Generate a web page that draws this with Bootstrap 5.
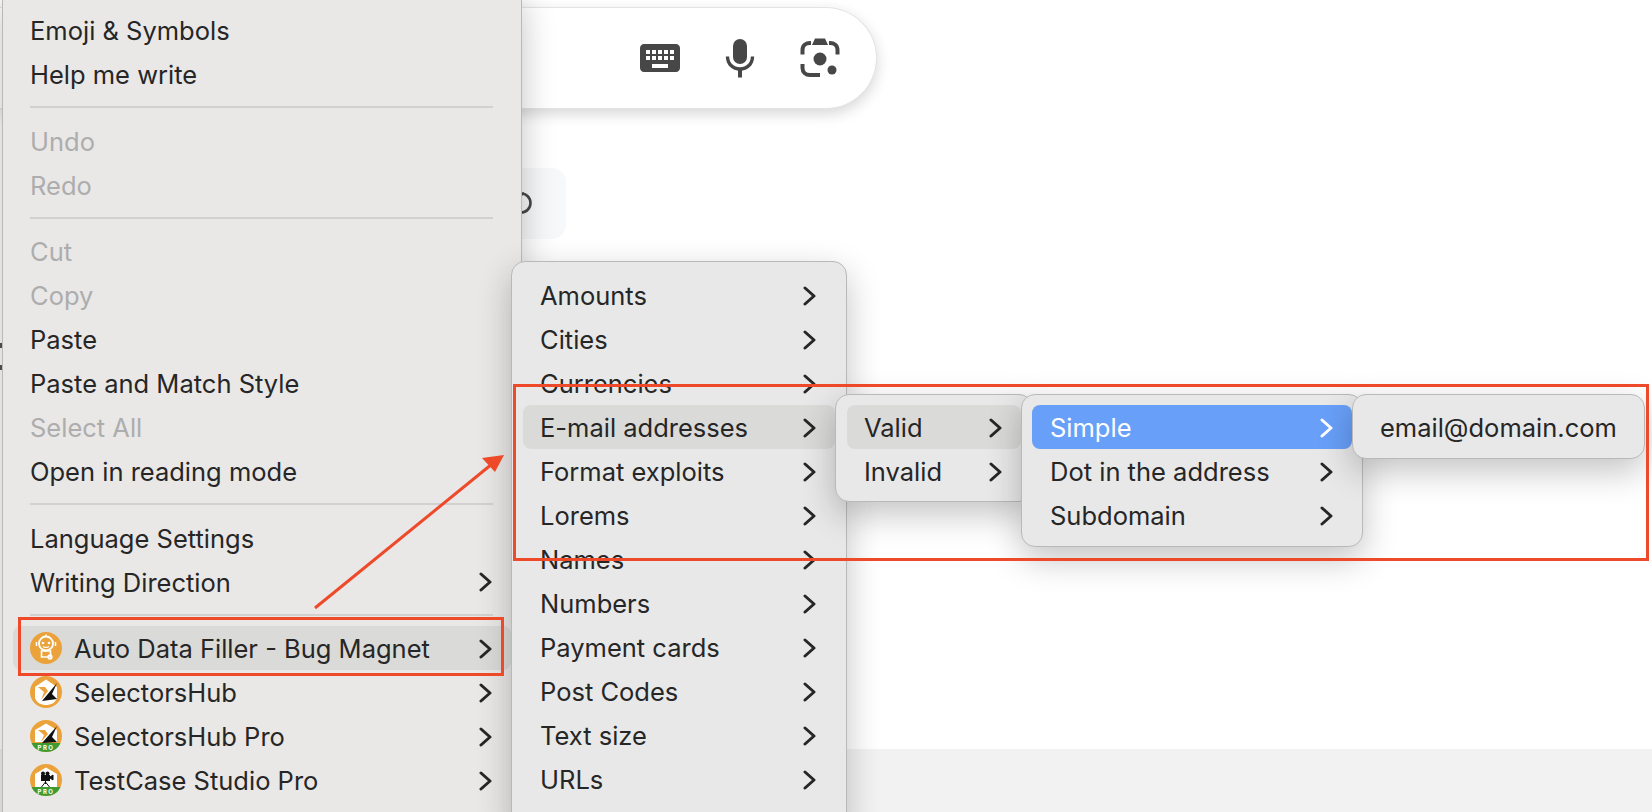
<!doctype html>
<html lang="en">
<head>
<meta charset="utf-8">
<title>Context menu</title>
<link href="https://cdn.jsdelivr.net/npm/bootstrap@5.3.0/dist/css/bootstrap.min.css" rel="stylesheet">
<style>
html,body{height:812px;overflow:hidden;background:#fff}
.stage{position:relative;height:812px;width:1652px;overflow:hidden;font-family:Inter,"Liberation Sans",sans-serif}
.search-pill{width:877px;height:102px;margin-top:7px;background:#fff;border-radius:0 52px 52px 0;border:1px solid #e3e3e8;border-left:0;box-shadow:0 5px 14px rgba(32,33,36,.18);padding-right:32px;gap:32px;flex:none}
.search-pill svg{display:block}
.ghost-chip{width:160px;height:71px;margin-top:59px;margin-left:406px;background:#f7f8f9;border-radius:14px;padding-left:104px;padding-bottom:4px;flex:none}
.foot-band{height:63px;background:#f2f2f2;flex:none}
.ctx{position:absolute;background:#e8e8e8;border:1px solid #b9b9b9;border-radius:14px;box-shadow:0 12px 34px rgba(0,0,0,.24);color:#262626;font-size:25.5px;letter-spacing:0;line-height:1}
.ctx-main{left:2px;top:-13px;width:520px;height:850px;padding:20px 10px 0;background:#e9e8e7}
.ctx-one{left:511px;top:261px;width:336px;height:570px;padding:11px 11px 0}
.ctx-two{left:835px;top:394px;width:198px;height:108px;padding:10px 11px}
.ctx-three{left:1021px;top:394px;width:342px;height:153px;padding:10px}
.ctx-three .rowitem{padding-left:18px}
.ctx-four{left:1352px;top:394px;width:293px;height:65px;padding:10px}
.rowitem{height:44px;padding:2px 18px 0 17px;border-radius:8px;white-space:nowrap;flex:none}
.rowitem.off{color:#adadad}
.rowitem.hov{background:#dadad9}
.rowitem.sel{background:#689ff8;color:#fff}
.rowitem.withicon{padding-left:0}
.appicon{width:32px;height:32px;margin:-2px 12px 0 17px;flex:none;display:block}
.chev{width:13px;height:20px;margin:-1px 1px 0 0;flex:none;display:block;fill:none;stroke:currentColor;stroke-width:3;stroke-linecap:round;stroke-linejoin:round}
.rule{height:2px;background:#d2d1d0;margin:10px 18px 10.5px 17px}
.redbox{position:absolute;border:3px solid #ee4a2a;pointer-events:none}
.redbox-a{left:513px;top:384px;width:1136px;height:177px}
.redbox-b{left:18px;top:617px;width:486px;height:59px}
.arrow{position:absolute;left:300px;top:440px;pointer-events:none}
.edgemark{position:absolute;left:0;width:2px;height:5px;background:#555}
</style>
</head>
<body>
<div class="stage d-flex flex-column">
  <div class="search-pill d-flex align-items-center justify-content-end">
    <svg width="48" height="48" viewBox="0 0 24 24" fill="#474747"><path d="M20 5H4c-1.100 0-1.990.9-1.990 2L2 17c0 1.100.9 2 2 2h16c1.100 0 2-.9 2-2V7c0-1.100-.9-2-2-2zm-9 3h2v2h-2V8zm0 3h2v2h-2v-2zM8 8h2v2H8V8zm0 3h2v2H8v-2zm-1 2H5v-2h2v2zm0-3H5V8h2v2zm9 7H8v-2h8v2zm0-4h-2v-2h2v2zm0-3h-2V8h2v2zm3 3h-2v-2h2v2zm0-3h-2V8h2v2z"/></svg>
    <svg width="48" height="48" viewBox="0 0 48 48" fill="#474747"><rect x="17" y="5" width="14" height="25" rx="7"/><path d="M11.500 22.500c0 7.500 5.500 12.500 12.500 12.500s12.500-5 12.500-12.500" fill="none" stroke="#474747" stroke-width="3.400"/><rect x="22" y="34" width="4" height="9.500"/></svg>
    <svg width="48" height="48" viewBox="0 0 48 48" fill="#474747"><path d="M15 9h-1c-4 0-7.500 2.500-7.500 7v4.500M33 9h1c4 0 7.500 2.500 7.500 7v4.500M6.500 30v4c0 4 3 7 7.500 7h10" fill="none" stroke="#474747" stroke-width="4"/><path d="M16 11l3-6.500h10l3 6.500z"/><circle cx="24" cy="25" r="6.500"/><circle cx="36" cy="36" r="4.500"/></svg>
  </div>
  <div class="ghost-chip d-flex align-items-center">
    <svg width="24" height="26" viewBox="0 0 24 26" fill="none" stroke="#474747" stroke-width="2.600"><circle cx="11" cy="14" r="9.500"/><path d="M8 4l3 2 3-2"/></svg>
  </div>
  <div class="foot-band mt-auto"></div>

  <div class="edgemark" style="top:343px"></div>
  <div class="edgemark" style="top:365px"></div>

  <div class="ctx ctx-main">
    <div class="rowitem d-flex align-items-center">Emoji &amp; Symbols</div>
    <div class="rowitem d-flex align-items-center">Help me write</div>
    <div class="rule"></div>
    <div class="rowitem off d-flex align-items-center">Undo</div>
    <div class="rowitem off d-flex align-items-center">Redo</div>
    <div class="rule"></div>
    <div class="rowitem off d-flex align-items-center">Cut</div>
    <div class="rowitem off d-flex align-items-center">Copy</div>
    <div class="rowitem d-flex align-items-center">Paste</div>
    <div class="rowitem d-flex align-items-center">Paste and Match Style</div>
    <div class="rowitem off d-flex align-items-center">Select All</div>
    <div class="rowitem d-flex align-items-center">Open in reading mode</div>
    <div class="rule"></div>
    <div class="rowitem d-flex align-items-center">Language Settings</div>
    <div class="rowitem d-flex align-items-center justify-content-between">Writing Direction<svg class="chev" viewBox="0 0 13 20"><path d="M2 2l9 8-9 8"/></svg></div>
    <div class="rule"></div>
    <div class="rowitem withicon hov d-flex align-items-center">
      <svg class="appicon" viewBox="0 0 32 32"><circle cx="16" cy="16" r="16" fill="#eba23a"/><circle cx="16" cy="11.500" r="7" fill="none" stroke="#fff" stroke-width="1.800"/><circle cx="13" cy="11" r="1.300" fill="#fff"/><circle cx="19" cy="11" r="1.300" fill="#fff"/><path d="M13 14.500c1.500 1 4.500 1 6 0M16 4.500V2.500M6.500 10v4M25.500 10v4" stroke="#fff" stroke-width="1.500" fill="none"/><path d="M11.500 19h9v6h-9z" fill="none" stroke="#fff" stroke-width="1.600"/><circle cx="20" cy="25" r="2" fill="none" stroke="#fff" stroke-width="1.300"/></svg>
      <span class="flex-grow-1">Auto Data Filler - Bug Magnet</span><svg class="chev" viewBox="0 0 13 20"><path d="M2 2l9 8-9 8"/></svg>
    </div>
    <div class="rowitem withicon d-flex align-items-center">
      <svg class="appicon" viewBox="0 0 32 32"><circle cx="16" cy="16" r="16" fill="#eba23a"/><path d="M16 3.500L27 11v11c-2 5-6 7-11 7s-9-2-11-7V11z" fill="#fff"/><path d="M8 11l7 0 3 4-7 9 3-8z" fill="#eba23a"/><path d="M27 7L12 25l15-2-5-5z" fill="#111"/></svg>
      <span class="flex-grow-1">SelectorsHub</span><svg class="chev" viewBox="0 0 13 20"><path d="M2 2l9 8-9 8"/></svg>
    </div>
    <div class="rowitem withicon d-flex align-items-center">
      <svg class="appicon" viewBox="0 0 32 32"><circle cx="16" cy="16" r="16" fill="#eba23a"/><path d="M16 3.500L27 10v12H5V10z" fill="#fff"/><path d="M8 10l7 0 3 4-7 8 3-7z" fill="#eba23a"/><path d="M27 6L12 23l15-1-5-5z" fill="#111"/><path d="M1.500 23h29c-2.500 6-8 9-14.500 9S4 29 1.500 23z" fill="#3f9b31"/><text x="16" y="30" text-anchor="middle" font-size="6" font-family="Inter,sans-serif" font-weight="700" letter-spacing="1.500" fill="#fff">PRO</text></svg>
      <span class="flex-grow-1">SelectorsHub Pro</span><svg class="chev" viewBox="0 0 13 20"><path d="M2 2l9 8-9 8"/></svg>
    </div>
    <div class="rowitem withicon d-flex align-items-center">
      <svg class="appicon" viewBox="0 0 32 32"><circle cx="16" cy="16" r="16" fill="#eba23a"/><path d="M16 3.500L27 10v13H5V10z" fill="#fff"/><rect x="11" y="11" width="9" height="6" fill="#111"/><circle cx="13" cy="9.500" r="2" fill="#111"/><circle cx="17.500" cy="9.500" r="2" fill="#111"/><path d="M20 13l3-2v5l-3-2zM15.500 17v3M15.500 18l-4 5M15.500 18l4 5" fill="#111" stroke="#111" stroke-width="1"/><path d="M1.500 23h29c-2.500 6-8 9-14.500 9S4 29 1.500 23z" fill="#3f9b31"/><text x="16" y="30" text-anchor="middle" font-size="6" font-family="Inter,sans-serif" font-weight="700" letter-spacing="1.500" fill="#fff">PRO</text></svg>
      <span class="flex-grow-1">TestCase Studio Pro</span><svg class="chev" viewBox="0 0 13 20"><path d="M2 2l9 8-9 8"/></svg>
    </div>
    <div class="rule"></div>
  </div>

  <div class="ctx ctx-one">
    <div class="rowitem d-flex align-items-center justify-content-between">Amounts<svg class="chev" viewBox="0 0 13 20"><path d="M2 2l9 8-9 8"/></svg></div>
    <div class="rowitem d-flex align-items-center justify-content-between">Cities<svg class="chev" viewBox="0 0 13 20"><path d="M2 2l9 8-9 8"/></svg></div>
    <div class="rowitem d-flex align-items-center justify-content-between">Currencies<svg class="chev" viewBox="0 0 13 20"><path d="M2 2l9 8-9 8"/></svg></div>
    <div class="rowitem hov d-flex align-items-center justify-content-between">E-mail addresses<svg class="chev" viewBox="0 0 13 20"><path d="M2 2l9 8-9 8"/></svg></div>
    <div class="rowitem d-flex align-items-center justify-content-between">Format exploits<svg class="chev" viewBox="0 0 13 20"><path d="M2 2l9 8-9 8"/></svg></div>
    <div class="rowitem d-flex align-items-center justify-content-between">Lorems<svg class="chev" viewBox="0 0 13 20"><path d="M2 2l9 8-9 8"/></svg></div>
    <div class="rowitem d-flex align-items-center justify-content-between">Names<svg class="chev" viewBox="0 0 13 20"><path d="M2 2l9 8-9 8"/></svg></div>
    <div class="rowitem d-flex align-items-center justify-content-between">Numbers<svg class="chev" viewBox="0 0 13 20"><path d="M2 2l9 8-9 8"/></svg></div>
    <div class="rowitem d-flex align-items-center justify-content-between">Payment cards<svg class="chev" viewBox="0 0 13 20"><path d="M2 2l9 8-9 8"/></svg></div>
    <div class="rowitem d-flex align-items-center justify-content-between">Post Codes<svg class="chev" viewBox="0 0 13 20"><path d="M2 2l9 8-9 8"/></svg></div>
    <div class="rowitem d-flex align-items-center justify-content-between">Text size<svg class="chev" viewBox="0 0 13 20"><path d="M2 2l9 8-9 8"/></svg></div>
    <div class="rowitem d-flex align-items-center justify-content-between">URLs<svg class="chev" viewBox="0 0 13 20"><path d="M2 2l9 8-9 8"/></svg></div>
  </div>

  <div class="ctx ctx-two">
    <div class="rowitem hov d-flex align-items-center justify-content-between">Valid<svg class="chev" viewBox="0 0 13 20"><path d="M2 2l9 8-9 8"/></svg></div>
    <div class="rowitem d-flex align-items-center justify-content-between">Invalid<svg class="chev" viewBox="0 0 13 20"><path d="M2 2l9 8-9 8"/></svg></div>
  </div>

  <div class="ctx ctx-three">
    <div class="rowitem sel d-flex align-items-center justify-content-between">Simple<svg class="chev" viewBox="0 0 13 20"><path d="M2 2l9 8-9 8"/></svg></div>
    <div class="rowitem d-flex align-items-center justify-content-between">Dot in the address<svg class="chev" viewBox="0 0 13 20"><path d="M2 2l9 8-9 8"/></svg></div>
    <div class="rowitem d-flex align-items-center justify-content-between">Subdomain<svg class="chev" viewBox="0 0 13 20"><path d="M2 2l9 8-9 8"/></svg></div>
  </div>

  <div class="ctx ctx-four">
    <div class="rowitem d-flex align-items-center">email@domain.com</div>
  </div>

  <div class="redbox redbox-a"></div>
  <div class="redbox redbox-b"></div>
  <svg class="arrow" width="210" height="175" viewBox="0 0 210 175"><path d="M15 168L192 24" stroke="#ee4a2a" stroke-width="3" fill="none"/><path d="M204 15L182 18l13 14z" fill="#ee4a2a"/></svg>
</div>
<script src="https://cdn.jsdelivr.net/npm/bootstrap@5.3.0/dist/js/bootstrap.bundle.min.js"></script>
</body>
</html>
